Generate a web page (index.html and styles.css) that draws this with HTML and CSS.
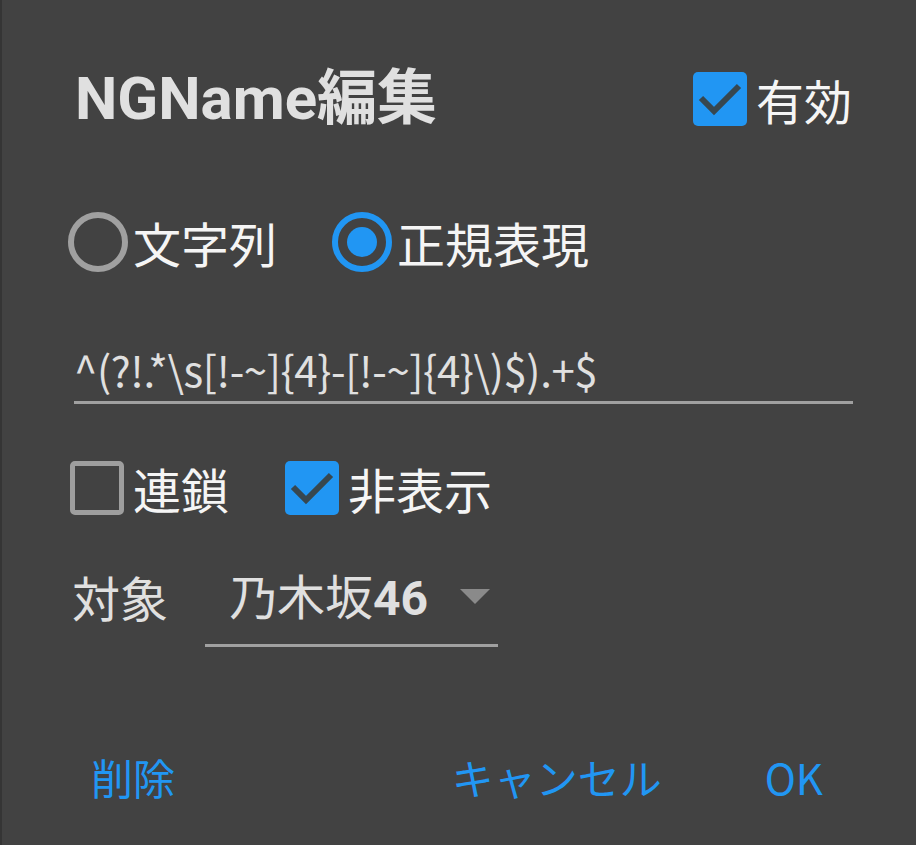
FILE: index.html
```html
<!DOCTYPE html>
<html lang="ja">
<head>
    <meta charset="UTF-8" />
    <meta name="viewport" content="width=device-width, initial-scale=1" />
    <title>NGName編集</title>
    <link rel="stylesheet" href="styles.css">
</head>
<body>
<div class="dialog">
    <div class="header">
        <h1 class="title">NGName編集</h1>
        <label class="check">
            <span class="box checked">
                <svg viewBox="0 0 54 54" width="54" height="54"><path d="M8 26 L21 39 L46 14" /></svg>
            </span>
            <span class="label">有効</span>
        </label>
    </div>

    <div class="radios">
        <label class="radio">
            <span class="circle"></span>
            <span class="label">文字列</span>
        </label>
        <label class="radio">
            <span class="circle on"></span>
            <span class="label">正規表現</span>
        </label>
    </div>

    <div class="field">^(?!.*\s[!-~]{4}-[!-~]{4}\)$).+$</div>

    <div class="checks">
        <label class="check">
            <span class="box"></span>
            <span class="label">連鎖</span>
        </label>
        <label class="check">
            <span class="box checked">
                <svg viewBox="0 0 54 54" width="54" height="54"><path d="M8 26 L21 39 L46 14" /></svg>
            </span>
            <span class="label">非表示</span>
        </label>
    </div>

    <div class="target">
        <span class="target-label">対象</span>
        <div class="select">
            <span class="value">乃木坂<b>46</b></span>
            <span class="arrow"></span>
        </div>
    </div>

    <div class="buttons">
        <a href="#" class="btn delete">削除</a>
        <a href="#" class="btn">キャンセル</a>
        <a href="#" class="btn ok">OK</a>
    </div>
</div>
</body>
</html>
```

FILE: styles.css
```css
body {
    margin: 0;
    padding: 0;
    background-color: #424242;
    font-family: "Noto Sans CJK JP", "Noto Sans", sans-serif;
    color: #f5f5f5;
}
.dialog {
    height: 845px;
    box-sizing: border-box;
    border-left: 2px solid #353535;
    padding: 72px 63px 0 70px;
    overflow: hidden;
}
.header {
    display: flex;
    justify-content: space-between;
    align-items: center;
    height: 54px;
}
.title {
    margin: 0 0 0 3px;
    font-family: Roboto, "Noto Sans CJK JP", sans-serif;
    font-size: 60px;
    font-weight: 700;
    line-height: 54px;
    color: #e0e0e0;
}
.label {
    font-size: 48px;
    line-height: 54px;
    color: #f5f5f5;
}
.check {
    display: flex;
    align-items: center;
    gap: 9px;
}
.header .check {
    margin-right: 1px;
}
.box {
    width: 54px;
    height: 54px;
    box-sizing: border-box;
    border: 5px solid #9e9e9e;
    border-radius: 5px;
}
.box.checked {
    border: none;
    background-color: #2196f3;
}
.box svg {
    display: block;
}
.box svg path {
    fill: none;
    stroke: #37474f;
    stroke-width: 6;
}
.radios {
    display: flex;
    align-items: center;
    gap: 55px;
    height: 60px;
    margin: 86px 0 0 -4px;
}
.radio {
    display: flex;
    align-items: center;
    gap: 5px;
}
.circle {
    width: 60px;
    height: 60px;
    box-sizing: border-box;
    border: 6px solid #a0a0a0;
    border-radius: 50%;
    display: flex;
    align-items: center;
    justify-content: center;
}
.circle.on {
    border-color: #2196f3;
}
.circle.on::after {
    content: "";
    width: 30px;
    height: 30px;
    border-radius: 50%;
    background-color: #2196f3;
}
.field {
    margin: 68px 0 0 2px;
    padding-left: 0;
    height: 61px;
    line-height: 58px;
    font-size: 42px;
    letter-spacing: -0.4px;
    color: #e0e0e0;
    border-bottom: 3px solid #a0a0a0;
    white-space: nowrap;
}
.checks {
    display: flex;
    align-items: center;
    gap: 56px;
    height: 54px;
    margin: 57px 0 0 -2px;
}
.target {
    display: flex;
    align-items: flex-start;
    margin: 33px 0 0 0;
}
.target-label {
    font-size: 48px;
    line-height: 96px;
    color: #e0e0e0;
    margin-right: 37px;
}
.select {
    display: flex;
    align-items: center;
    width: 293px;
    height: 99px;
    padding: 0 8px 0 24px;
    box-sizing: border-box;
    border-bottom: 3px solid #a0a0a0;
}
.value {
    font-size: 48px;
    line-height: 96px;
    color: #e0e0e0;
    flex: 1;
}
.value b {
    font-family: Roboto, sans-serif;
    font-weight: 700;
}
.arrow {
    width: 0;
    height: 0;
    border-left: 15px solid transparent;
    border-right: 15px solid transparent;
    border-top: 15px solid #8a8a8a;
}
.buttons {
    display: flex;
    align-items: center;
    height: 80px;
    margin-top: 90px;
}
.btn {
    font-size: 42px;
    line-height: 80px;
    color: #2196f3;
    text-decoration: none;
}
.delete {
    margin-left: 19px;
    margin-right: auto;
}
.ok {
    margin-left: 103px;
    margin-right: 30px;
}
```
